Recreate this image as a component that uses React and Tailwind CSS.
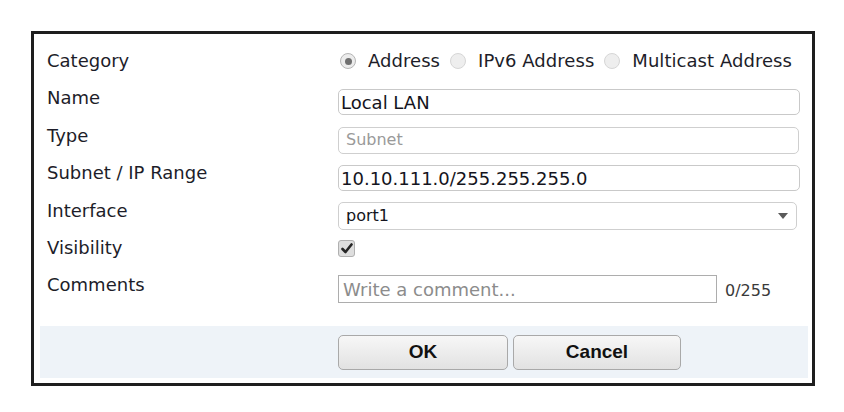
import React from "react";

const font = { fontFamily: '"DejaVu Sans", Verdana, sans-serif' };
const btnFont = { fontFamily: '"Liberation Sans Narrow", "Liberation Sans", Arial, sans-serif' };

// Single radio bullet with label
const Radio = ({ label, checked }) => (
  <label className="flex shrink-0 items-center whitespace-nowrap">
    <span
      className={
        "flex h-[16px] w-[16px] shrink-0 items-center justify-center rounded-full border " +
        (checked ? "border-[#b5b5b5] bg-[#ececec]" : "border-[#d6d6d6] bg-[#eeeeee]")
      }
    >
      {checked && <span className="h-[7px] w-[7px] rounded-full bg-[#6f6f6f]" />}
    </span>
    <span className="ml-[12px] mr-[10px] text-[18px] leading-[22px] tracking-[0.05px] text-[#1d1d29]">{label}</span>
  </label>
);

const Row = ({ label, children }) => (
  <div className="flex h-[37.4px] items-start">
    <div className="w-[291px] shrink-0 text-[18px] leading-[22px] text-[#1d1d29]">{label}</div>
    <div className="flex-1">{children}</div>
  </div>
);

export default function App() {
  return (
    <div className="h-[412px] w-[844px] bg-white pl-[31px] pt-[31px]" style={font}>
      <div className="flex h-[355px] w-[784px] flex-col border-[3px] border-[#1e1e1e] bg-white">
        <div className="pl-[13px] pr-[12px] pt-[16px]">
          <Row label="Category">
            <div className="flex items-center whitespace-nowrap pl-[2px]">
              <Radio label="Address" checked />
              <Radio label="IPv6 Address" />
              <Radio label="Multicast Address" />
            </div>
          </Row>
          <Row label="Name">
            <div className="mt-[2px] flex h-[26px] w-[462px] items-center rounded-[5px] border border-[#c9c9c9] px-[2px] text-[18px] text-[#141420]">
              Local LAN
            </div>
          </Row>
          <Row label="Type">
            <div className="mt-[2px] flex h-[27px] w-[461px] items-center rounded-[5px] border border-[#cfcfcf] px-[7px] text-[16px] text-[#9a9a9a]">
              Subnet
            </div>
          </Row>
          <Row label="Subnet / IP Range">
            <div className="mt-[3px] flex h-[26px] w-[462px] items-center rounded-[5px] border border-[#c9c9c9] px-[2px] text-[18px] text-[#141420]">
              10.10.111.0/255.255.255.0
            </div>
          </Row>
          <Row label="Interface">
            <div className="mt-[2px] flex h-[28px] w-[459px] items-center justify-between rounded-[5px] border border-[#cfcfcf] pl-[7px] pr-[8px] text-[16px] text-[#141420]">
              <span>port1</span>
              <svg width="10" height="6" viewBox="0 0 10 6">
                <path d="M0 0 L10 0 L5 6 Z" fill="#5a5a5a" />
              </svg>
            </div>
          </Row>
          <Row label="Visibility">
            <div className="mt-[3px] flex h-[17px] w-[17px] items-center justify-center rounded-[3px] border border-[#b0b0b0] bg-[#dedede]">
              <svg width="12" height="11" viewBox="0 0 12 11">
                <path d="M1.5 6 L4.5 9 L10.5 1.5" fill="none" stroke="#262626" strokeWidth="2.6" strokeLinecap="round" strokeLinejoin="round" />
              </svg>
            </div>
          </Row>
          <Row label="Comments">
            <div className="flex items-center">
              <div className="mt-[1px] flex h-[28px] w-[379px] items-center border border-[#adadad] px-[4px] text-[18px] text-[#8c8c8c]">
                Write a comment...
              </div>
              <span className="ml-[8px] mt-[4px] text-[16px] text-[#3a3a3a]">0/255</span>
            </div>
          </Row>
        </div>
        <div className="mb-[5px] ml-[6px] mr-[4px] mt-auto flex h-[52px] items-center bg-[#eef3f8] pl-[298px]">
          <button
            className="h-[35px] w-[170px] rounded-[5px] border border-[#a9a9a9] bg-gradient-to-b from-[#f7f7f7] to-[#e2e2e2] text-[19px] font-bold text-[#111]"
            style={btnFont}
          >
            OK
          </button>
          <button
            className="ml-[5px] h-[35px] w-[168px] rounded-[5px] border border-[#a9a9a9] bg-gradient-to-b from-[#f7f7f7] to-[#e2e2e2] text-[19px] font-bold text-[#111]"
            style={btnFont}
          >
            Cancel
          </button>
        </div>
      </div>
    </div>
  );
}
